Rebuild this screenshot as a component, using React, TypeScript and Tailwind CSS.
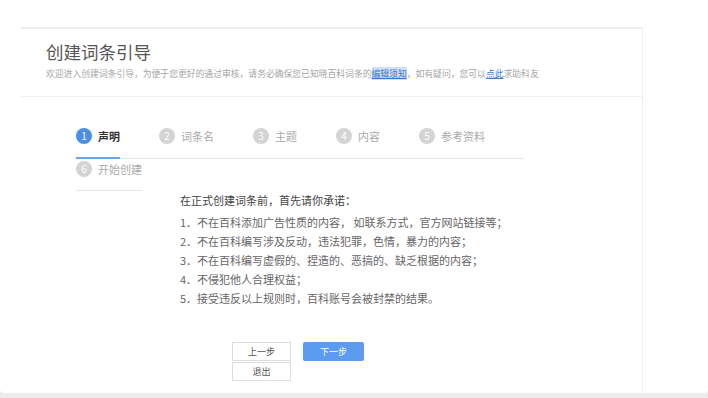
import React from 'react';

const steps = [
  { n: 1, label: '声明' },
  { n: 2, label: '词条名' },
  { n: 3, label: '主题' },
  { n: 4, label: '内容' },
  { n: 5, label: '参考资料' },
  { n: 6, label: '开始创建' },
];

const rules = [
  '1．不在百科添加广告性质的内容， 如联系方式，官方网站链接等；',
  '2．不在百科编写涉及反动，违法犯罪，色情，暴力的内容；',
  '3．不在百科编写虚假的、捏造的、恶搞的、缺乏根据的内容；',
  '4．不侵犯他人合理权益；',
  '5．接受违反以上规则时，百科账号会被封禁的结果。',
];

function Step({ n, label, active, last }: { n: number; label: string; active?: boolean; last?: boolean }) {
  return (
    <div className={last ? 'border-b border-[#e6e6e6]' : 'pr-[39px] border-b border-[#e6e6e6]'}>
      <div className={active ? 'relative flex items-center gap-[6px] pt-[2px] pb-[13px]' : 'flex items-center gap-[6px] pt-[2px] pb-[13px]'}>
        <span
          className={
            active
              ? 'flex h-[16px] w-[16px] items-center justify-center rounded-full bg-[#4a8fe7] text-[10px] leading-none text-white'
              : 'flex h-[16px] w-[16px] items-center justify-center rounded-full bg-[#d4d4d4] text-[10px] leading-none text-white'
          }
        >
          {n}
        </span>
        <span className={active ? 'text-[11px] font-bold text-[#333]' : 'text-[11px] text-[#aaa]'}>{label}</span>
        {active && <span className="absolute bottom-[-1px] left-0 right-0 h-[2px] bg-[#6aa3ee]" />}
      </div>
    </div>
  );
}

export default function App() {
  return (
    <div className="h-[398px] w-[708px] bg-[#ececec] font-['Noto_Sans_CJK_SC','Noto_Sans',sans-serif]">
      <div className="h-[393px] rounded-b-[4px] bg-white pt-[27px]">
        <div className="ml-[21px] h-[365px] w-[622px] border-t-2 border-r border-[#eeeeee]">
          <div className="border-b border-[#f0f0f0] px-[25px] pt-[11px] pb-[16px]">
            <h1 className="text-[17.5px] leading-[24px] text-[#555]">创建词条引导</h1>
            <p className="mt-[4px] text-[8.8px] leading-[12px] text-[#a6a6a6]">
              欢迎进入创建词条引导，为便于您更好的通过审核，请务必确保您已知晓百科词条的
              <span className="bg-[#cfe0f7] text-[#3a78d8] underline">编辑须知</span>
              ，如有疑问，您可以<span className="text-[#3a78d8] underline">点此</span>求助科友
            </p>
          </div>

          <div className="pl-[55px] pt-[29px]">
            <div className="flex w-[475px] flex-wrap">
              {steps.map((s, i) => (
                <Step key={s.n} n={s.n} label={s.label} active={i === 0} last={i === steps.length - 1} />
              ))}
            </div>
          </div>

          <div className="pl-[159px]">
            <p className="text-[11px] leading-[19px] text-[#444]">在正式创建词条前，首先请你承诺：</p>
            <ul className="mt-[3px]">
              {rules.map((r) => (
                <li key={r} className="text-[11px] leading-[19px] text-[#666]">
                  {r}
                </li>
              ))}
            </ul>
          </div>

          <div className="mt-[34px] flex items-start gap-[12px] pl-[211px]">
            <div className="flex flex-col gap-[1px]">
              <button className="h-[19px] w-[59px] border border-[#dddddd] bg-white text-[9px] text-[#555]">上一步</button>
              <button className="h-[19px] w-[59px] border border-[#dddddd] bg-white text-[9px] text-[#555]">退出</button>
            </div>
            <button className="h-[19px] w-[61px] rounded-[2px] bg-[#5b9bf0] text-[9px] text-white">下一步</button>
          </div>
        </div>
      </div>
    </div>
  );
}
